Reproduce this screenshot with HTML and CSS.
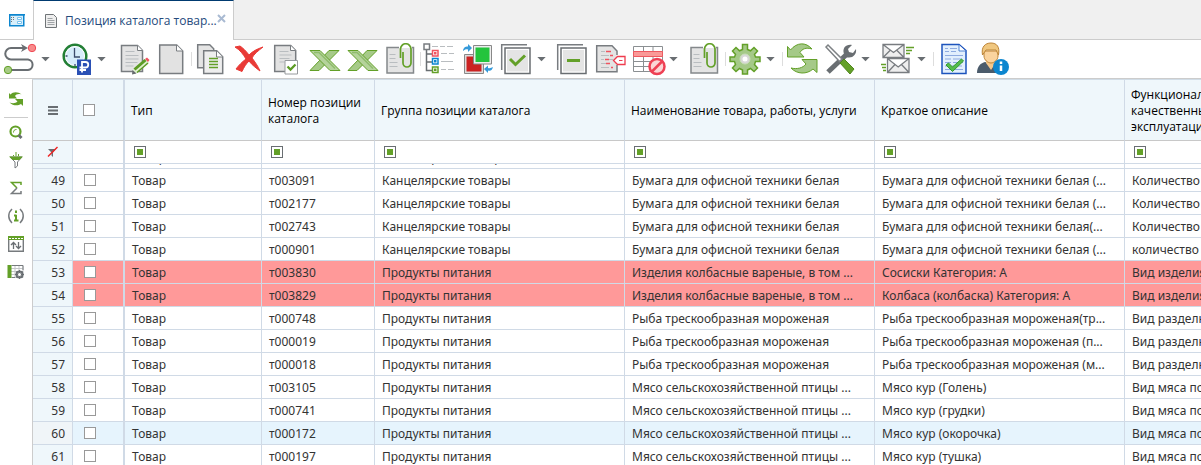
FILE: index.html
```html
<!DOCTYPE html>
<html lang="ru">
<head>
<meta charset="utf-8">
<title>Позиция каталога товаров</title>
<link rel="stylesheet" href="styles.css">
</head>
<body>
<svg class="defs" aria-hidden="true">
  <defs>
    <symbol id="xls" viewBox="0 0 32 32"><path d="M20 7.500h10L10 27.500H1L12 16z" fill="#a6ca88" stroke="#63a028"/><path d="M1 7.500h10l20 20H21z" fill="#b5d39b" stroke="#63a028"/><path d="M5 9.500h5l16 16" fill="none" stroke="#8fbc6c" stroke-width="1.500"/></symbol>
    <symbol id="clip" viewBox="0 0 32 32"><path d="M2 5h26.500v25H2z" fill="#e4e4e4"/><path d="M14 4.500H2v25.500h26.500v-25.500H27" fill="none" stroke="#84888b" stroke-width="1.500"/><path d="M4.500 11.500h6m-6 4h6m-6 4h8m-8 4h8" stroke="#b9bdc0"/><path d="M15.500 15V6a5 5 0 0 1 10.500 0v14a3.500 3.500 0 0 1-8 0V9" fill="none" stroke="#63a028" stroke-width="1.700"/></symbol>
    <symbol id="caret" viewBox="0 0 10 6"><path d="M0 0h10L5 5z" fill="#696e72"/></symbol>
  </defs>
</svg>

<header class="tabs">
  <button class="tab-home" aria-label="Главная"><svg width="16" height="14" viewBox="0 0 16 14"><path d="M.75 1.750h14v11h-14z" fill="#d8effb" stroke="#0c86cf" stroke-width="1.500"/><path d="M0 1h16v1.500H0z" fill="#0c86cf"/><path d="M2 4.500h1m1 0h1M2 6.500h1m1 0h1M2 8.500h1" stroke="#777"/><path d="M8.500 4.500h4v2h-4zm0 4h4v2h-4z" fill="#fff" stroke="#79c2ee"/></svg></button>
  <div class="tab">
    <svg width="12" height="14" viewBox="0 0 12 14"><path d="M.5.5h8l3 3v10H.5z" fill="#eee" stroke="#6f7477"/><path d="M2.500 4.500h5m-5 2h7m-7 2h7m-7 2h7" stroke="#a0a4a7"/></svg>
    <span class="tab-title">Позиция каталога товар...</span>
    <button class="tab-close" aria-label="Закрыть"><svg width="9" height="9" viewBox="0 0 9 9"><path d="M1 1l7 7M8 1L1 8" stroke="#a9bad2" stroke-width="2"/></svg></button>
  </div>
</header>

<nav class="toolbar">
  <div class="tool-group">
    <button class="tool" aria-label="Маршрут"><svg viewBox="0 0 32 32"><path d="M22 5H7a5.700 5.700 0 0 0 0 11.500h17a5.300 5.300 0 0 1 0 10.500H8" fill="none" stroke="#696e72" stroke-width="2"/><path d="M17 1l7 4-7 4 2-4z" fill="#696e72"/><circle cx="28" cy="5" r="3.700" fill="#f88b8b" stroke="#ef4a55"/><circle cx="4" cy="27" r="3.700" fill="#a7cb85" stroke="#63a028"/></svg></button>
    <button class="more" aria-label="Ещё"><svg><use href="#caret"/></svg></button>
    <button class="tool" aria-label="Расчёт"><svg viewBox="0 0 32 32"><circle cx="15" cy="13" r="11.300" fill="#d7edfb" stroke="#237f35" stroke-width="2.500"/><circle cx="15" cy="13" r="9.500" fill="none" stroke="#fff"/><path d="M14.500 5v9H20M15 21v2M5.500 13h2" fill="none" stroke="#3c4c6c" stroke-width="1.300"/><path d="M17 16.500h14V32H17z" fill="#2a50b5"/><path d="M22 29.500v-10.500h3.500a2.700 2.700 0 0 1 0 5.500H19.500m0 2.500H26" fill="none" stroke="#fff" stroke-width="1.800"/></svg></button>
    <button class="more" aria-label="Ещё"><svg><use href="#caret"/></svg></button>
  </div>
  <div class="tool-group">
    <button class="tool" aria-label="Изменить"><svg viewBox="0 0 32 32"><path d="M3.500 2.500h16l5 5v21h-21z" fill="#e4e4e4" stroke="#787c80" stroke-width="1.500"/><path d="M19.500 2.500v5h5" fill="#fff" stroke="#787c80"/><path d="M7.500 8.500h9m-9 4h13m-13 3.500h13m-13 3.500h12m-12 3.500h8" stroke="#b9bdc0"/><path d="M14.500 31l1-5L27 16l4 3.500-12 10.500z" fill="#dff0cd"/><path d="M17 27l11-9.500M19 29.500L30 20M16 26l11-9.500" stroke="#5c9b24" stroke-width="1.500"/><path d="M14 31.500l.5-4.500 4 3.500z" fill="#676b6f"/><path d="M27 16l2-1.500 2.500 2.500-1.500 2z" fill="#f05360"/></svg></button>
    <button class="tool" aria-label="Создать"><svg viewBox="0 0 32 32"><path d="M3.700 2h17l6 6v22.500h-23z" fill="#e2e2e2" stroke="#787c80" stroke-width="1.500"/><path d="M20.500 2v6h6" fill="#fff" stroke="#787c80"/></svg></button>
    <span class="sep"></span>
    <button class="tool" aria-label="Копировать"><svg viewBox="0 0 32 32"><path d="M2.700 1.700h12l4 4v19h-16z" fill="#e4e4e4" stroke="#787c80" stroke-width="1.500"/><path d="M8.700 7.700h13l6 6v16.800h-19z" fill="#eee" stroke="#787c80" stroke-width="1.500"/><path d="M21.500 8v6h6" fill="#fff" stroke="#787c80"/><path d="M14 15.500h9m-9 3h9m-9 3h9m-9 3h9" stroke="#63a028" stroke-width="1.300"/></svg></button>
    <button class="tool" aria-label="Удалить"><svg viewBox="0 0 32 32"><path d="M2 4l5-1c3 2 6 5 9 9 4-4 8-6 14-8-5 4-9 7-11 11 3 4 6 8 8 13-4-3-8-6-11-10-3 3-5 6-7 10.500L3 26c3-4 6-7 10-10-3-5-6-9-11-12z" fill="#e93a36" stroke="#e93a36"/></svg></button>
    <button class="tool" aria-label="Проверить"><svg viewBox="0 0 32 32"><path d="M3.700 2.500h16l5 5v21h-21z" fill="#e2e2e2" stroke="#787c80" stroke-width="1.500"/><path d="M19.500 2.500v5h5" fill="#fff" stroke="#787c80"/><path d="M8.500 8.500h9m-9 3.500h12m-12 3.500h10m-10 3.500h5" stroke="#b9bdc0"/><path d="M14 17.500h12.500V31H14z" fill="#fff" stroke="#969a9d"/><path d="M16.500 23.500l3 3 5-5" fill="none" stroke="#5c9b24" stroke-width="2.300"/></svg></button>
    <button class="tool" aria-label="Экспорт в Excel"><svg><use href="#xls"/></svg></button>
    <button class="tool" aria-label="Экспорт списка в Excel"><svg><use href="#xls"/></svg></button>
    <button class="tool" aria-label="Вложения"><svg><use href="#clip"/></svg></button>
    <span class="sep"></span>
    <button class="tool" aria-label="Иерархия"><svg viewBox="0 0 32 32"><path d="M2.500 6.500v21H8M2.500 11H8m-5.500 8H8" fill="none" stroke="#696e72" stroke-width="1.500"/><g fill="#fff" stroke-width="1.500"><path d="M0 1h5.500v5.500H0z" stroke="#787c80"/><path d="M8.500 7.500H14V13H8.500z" stroke="#f05360"/><path d="M8.500 15.500H14V21H8.500z" stroke="#0c86cf"/><path d="M8.500 24H14v5.500H8.500z" stroke="#63a028"/></g><path d="M10 9h2.500v2.500H10z" fill="#f05360"/><path d="M10 17h2.500v2.500H10z" fill="#0c86cf"/><path d="M10 25.500h2.500V28H10z" fill="#63a028"/><path d="M8 3.500h6m2 0h5m2 0h6M17 10.500h6m2 0h5M17 18.500h12M17 26.500h5m2 0h6" stroke="#b9bdc0"/></svg></button>
    <button class="tool" aria-label="Обмен"><svg viewBox="0 0 32 32"><path d="M2.500 11.500h19v19h-19z" fill="#ddd" stroke="#888"/><path d="M4.500 13.500h15v15h-15z" fill="#cb2222"/><path d="M11.500 2.500h18v18.500h-18z" fill="#eee" stroke="#888"/><path d="M13.500 4.500h14V19h-14z" fill="#23c43d"/><path d="M1 7c1-3 3-4 5-3.500V1l4 4-4 4V6.500C4 6 3 6.500 1 8z" fill="#359ada"/><path d="M31 24c-1 4-3 4-5 3.500V30l-4-4 4-3.500V25c2 .5 3 0 5-1z" fill="#359ada"/></svg></button>
    <button class="tool" aria-label="Отметить"><svg viewBox="0 0 32 32"><path d="M1.700 27V1.700H27" fill="none" stroke="#787c80" stroke-width="1.500"/><path d="M5 5h25v25.500H5z" fill="#fff" stroke="#696e72" stroke-width="1.500"/><path d="M7 7h21v21.500H7z" fill="#e4e4e4"/><path d="M10 16l5.500 5.500L25 12.500" fill="none" stroke="#63a028" stroke-width="3"/></svg></button>
    <button class="more" aria-label="Ещё"><svg><use href="#caret"/></svg></button>
    <button class="tool" aria-label="Снять отметку"><svg viewBox="0 0 32 32"><path d="M1.700 27V1.700H27" fill="none" stroke="#787c80" stroke-width="1.500"/><path d="M5 5h25v25.500H5z" fill="#fff" stroke="#696e72" stroke-width="1.500"/><path d="M7 7h21v21.500H7z" fill="#e4e4e4"/><path d="M11 17.500h13" stroke="#63a028" stroke-width="3"/></svg></button>
    <button class="tool" aria-label="Метка"><svg viewBox="0 0 32 32"><path d="M2.700 2.700h15l5 5v21h-20z" fill="#e4e4e4"/><path d="M23 12V8l-5-5.300H2.700v26H23V22" fill="none" stroke="#787c80" stroke-width="1.500"/><path d="M7 8.500h4m-4 4h8m-8 4h3m5 0h4m-12 4h5m-5 4h8" stroke="#b9bdc0"/><path d="M12 8.500h5m-1 4h3m-8 4h4m-3 4h4m1 4h2" stroke="#f05360" stroke-width="1.500"/><path d="M19.500 17.500l4-4H31v8h-7.500z" fill="#fff" stroke="#ef3c4e" stroke-width="1.300"/><path d="M25 17.500h3.500" stroke="#ef3c4e"/></svg></button>
    <button class="tool" aria-label="Запретить строки"><svg viewBox="0 0 32 32"><path d="M1.500 3.500h29v25h-29zM1.500 13.500h29M1.500 18.500h29M1.500 23.500h29M11.500 3v25M21 3v25" fill="#fff" stroke="#8b8f92"/><path d="M1.500 8.500h29v5h-29z" fill="#f99a98" stroke="#ee5a61"/><circle cx="25" cy="23.500" r="7.500" fill="#fbd5d6" stroke="#ee4054" stroke-width="2.500"/><path d="M20 18.500l10 10" stroke="#ee4054" stroke-width="2.500" transform="matrix(-1 0 0 1 50 0)"/></svg></button>
    <button class="more" aria-label="Ещё"><svg><use href="#caret"/></svg></button>
    <button class="tool" aria-label="Прикрепить"><svg><use href="#clip" x="1"/></svg></button>
  </div>
  <span class="sep"></span>
  <div class="tool-group">
    <button class="tool" aria-label="Настройки"><svg viewBox="0 0 32 32"><path d="M13.500 1.500h5v5l3 1.300L25 4.500l3.500 3.500-3 3.500 1 2.500H31v4.500h-4.500l-1 3 3 3.500-3.500 3.500-3.500-3-3 1.500v4h-5v-4l-3-1.500L7 28.500 3.500 25l3-3.500-1-3H1V14h4.500l1-2.500-3-3.500L7 4.500l3.500 3.300 3-1.300z" fill="#a5c988" stroke="#63a028" stroke-width="1.500"/><circle cx="16" cy="16" r="5" fill="#d8d8d8" stroke="#c9dfb8"/><circle cx="16" cy="16" r="2.500" fill="#fff"/></svg></button>
    <button class="more" aria-label="Ещё"><svg><use href="#caret"/></svg></button>
    <span class="sep"></span>
    <button class="tool" aria-label="Обновить"><svg viewBox="0 0 32 32"><path d="M1.500 3.500l3 3.500C11-1 20-1 26 6c-6-2-10 0-12 3.500l4 4.500H1.500z" fill="#a5c988" stroke="#63a028"/><path d="M31 29.500V16.500H16l4 4.500c-3 4-9 5.500-15 4 6 6.500 16 6.500 22 1z" fill="#a5c988" stroke="#63a028"/></svg></button>
    <button class="tool" aria-label="Инструменты"><svg viewBox="0 0 32 32"><path d="M4 29L23 11" stroke="#696e72" stroke-width="5"/><path d="M20 11c-2-6 2-10 8-9l-4 4 1 3 4 1 3-4c1 6-4 10-10 8z" fill="#696e72"/><path d="M2 4l2-2 14 14-2.500 2.500z" fill="#fff" stroke="#7d8184" stroke-width="1.500"/><path d="M16 20l4-4 10 10-4 5z" fill="#63a028" stroke="#4f861c"/></svg></button>
    <button class="more" aria-label="Ещё"><svg><use href="#caret"/></svg></button>
    <button class="tool" aria-label="Рассылка"><svg viewBox="0 0 32 32"><g fill="#eee" stroke="#787c80" stroke-width="1.300"><path d="M3 1.500h21v13H3zM3 1.500l10.500 8 10.500-8M3 14.500l7-7m14 7l-7-7"/><path d="M7.500 15.500H29v14H7.500zm0 0l10.700 8.500 10.800-8.500m-21.500 14l7.500-8m14 8l-7.500-8"/></g><path d="M26 4.500h8m-8 3h6m-6 3h4M1 21.500h5m-4 3h4m-3 3h3" stroke="#63a028" stroke-width="1.300"/></svg></button>
    <button class="more" aria-label="Ещё"><svg><use href="#caret"/></svg></button>
    <span class="sep"></span>
    <button class="tool" aria-label="Протокол"><svg viewBox="0 0 32 32"><path d="M5 1.500h17l7 6v23H5z" fill="#e2effd" stroke="#1d54bd" stroke-width="1.500"/><path d="M22 2v6h6.500" fill="#fff" stroke="#4e83d4"/><path d="M8 5.500h3m2 0h7M8 8.500h4m2 0h5M8 12.500h18M8 16h6m2 0h9M8 19.500h6m2 0h10M8 23h5m2 0h10M8 26.500h18" stroke="#8eabe0"/><path d="M9 22l2.500-2 4 4L24.500 16l2 2L15.500 28.500z" fill="#54bd4b" stroke="#329a2c"/></svg></button>
    <button class="tool" aria-label="О пользователе"><svg viewBox="0 0 32 32"><path d="M2 30c0-7 4-10 8-11l7 2 6 9z" fill="#4b5b6b"/><path d="M11 16h9v5l-4 6-5-7z" fill="#f5c78b"/><path d="M9 8h14v5c0 4-4 7-7 7s-7-3-7-7z" fill="#fad39e" stroke="#bd8437"/><path d="M7.500 12C6 4 10 0 16 0s9 4 7.500 12L21 7H11z" fill="#f0c77f" stroke="#bd8437"/><circle cx="26" cy="24" r="8" fill="#0c86cf"/><path d="M26 22.500V28M26 18.500V21" stroke="#fff" stroke-width="2.500"/></svg></button>
  </div>
</nav>

<main class="workspace">
  <aside class="side">
    <button class="side-btn" aria-label="Обновить"><svg width="16" height="16" viewBox="0 0 16 16"><path d="M1 2l1.500 1.500C5 .5 10 .5 13.500 3.500 10 2.500 8 3.500 7 5l2 2.500H1z" fill="#63a028"/><path d="M15 15V8H7l2.500 2.500c-2 2-5 2-8 1 3.500 3.500 8.500 3.500 11.500 1.500z" fill="#63a028"/></svg></button>
    <button class="side-btn" aria-label="Поиск"><svg width="16" height="16" viewBox="0 0 16 16"><circle cx="7.500" cy="7.500" r="5" fill="#fff" stroke="#63a028" stroke-width="2.200"/><path d="M5.500 8.500c0-2 1-3 3-3" fill="none" stroke="#63a028"/><path d="M10.500 11l3 3" stroke="#696e72" stroke-width="3"/></svg></button>
    <button class="side-btn" aria-label="Фильтр"><svg width="16" height="16" viewBox="0 0 16 16"><path d="M2 5h12l-4.500 5v4l-2.500 2v-6z" fill="#fff" stroke="#777b7e"/><path d="M1 4.500h14L11.500 8h-7z" fill="#63a028"/><path d="M5.500 3v1m2.500-4v4m2.500-2v2" stroke="#63a028"/></svg></button>
    <button class="side-btn" aria-label="Сумма"><svg width="16" height="16" viewBox="0 0 16 16"><path d="M13 5V2.500H3.500L9 8" fill="none" stroke="#63a028" stroke-width="1.500"/><path d="M9 8l-5.500 5.500H13V11" fill="none" stroke="#777b7e" stroke-width="1.500"/></svg></button>
    <button class="side-btn" aria-label="Информация"><svg width="16" height="16" viewBox="0 0 16 16"><path d="M4 1C-.3 5-.3 11 4 15M12 1c4.300 4 4.300 10 0 14" fill="none" stroke="#777b7e" stroke-width="1.500"/><path d="M8 7v6M6 7.500h2.500M6 12.500h4.500M8 2.500v2.500" stroke="#63a028" stroke-width="2"/></svg></button>
    <button class="side-btn" aria-label="Сортировка"><svg width="16" height="16" viewBox="0 0 16 16"><path d="M.7.7h14.600v14.600H.7z" fill="#fff" stroke="#777b7e" stroke-width="1.400"/><path d="M0 0h16v4H0z" fill="#63a028"/><path d="M1 2.500h14" stroke="#fff" stroke-dasharray="2 1"/><path d="M5.500 13V6.500M3 9l2.500-2.500L8 9M10.500 6v6.500M8 10l2.500 2.500L13 10" fill="none" stroke="#696e72" stroke-width="1.300"/></svg></button>
    <button class="side-btn" aria-label="Настройка таблицы"><svg width="16" height="16" viewBox="0 0 16 16"><path d="M1 1.500h14v12H1zM1 4.500h14M1 7.500h14M1 10.500h14M7 1v13M11 1v13" fill="#fff" stroke="#c4c7c9"/><path d="M2.500 1v13M.5 1v13" stroke="#63a028" stroke-width="2"/><path d="M4 1.500h11V6M4 13.500h3" fill="none" stroke="#777b7e"/><circle cx="11.500" cy="10.500" r="3" fill="#fff" stroke="#696e72" stroke-width="2"/><path d="M11.500 6v9M7 10.500h9M8.500 7.500l6 6M14.500 7.500l-6 6" stroke="#696e72"/><circle cx="11.500" cy="10.500" r="1.500" fill="#fff"/></svg></button>
  </aside>

  <section class="grid">
    <table class="sheet sheet-head">
      <colgroup><col class="c-num"><col class="c-check"><col class="c-type"><col class="c-code"><col class="c-text"><col class="c-text"><col class="c-text"><col class="c-text"></colgroup>
      <thead>
        <tr class="titles">
          <th><button class="menu" aria-label="Меню"><svg width="10" height="9" viewBox="0 0 10 9"><path d="M0 1h10M0 4.500h10M0 8h10" stroke="#696e72" stroke-width="2"/></svg></button></th>
          <th><input type="checkbox" aria-label="Выбрать все"></th>
          <th>Тип</th><th>Номер позиции каталога</th><th>Группа позиции каталога</th><th>Наименование товара, работы, услуги</th><th>Краткое описание</th><th>Функциональные,<br>качественные,<br>эксплуатационные</th>
        </tr>
        <tr class="filters">
          <td><button class="menu" aria-label="Сбросить фильтр"><svg width="12" height="12" viewBox="0 0 12 12"><path d="M1 3h8L6 6.500V11L4.500 9.500v-3z" fill="#696e72"/><path d="M1 10.500L10.500 1" stroke="#e22" stroke-width="1.500"/></svg></button></td>
          <td></td>
          <td><button class="filter" aria-label="Фильтр: тип"></button></td>
          <td><button class="filter" aria-label="Фильтр: номер"></button></td>
          <td><button class="filter" aria-label="Фильтр: группа"></button></td>
          <td><button class="filter" aria-label="Фильтр: наименование"></button></td>
          <td><button class="filter" aria-label="Фильтр: описание"></button></td>
          <td><button class="filter" aria-label="Фильтр: характеристики"></button></td>
        </tr>
      </thead>
    </table>
    <div class="viewport">
      <table class="sheet sheet-body">
        <colgroup><col class="c-num"><col class="c-check"><col class="c-type"><col class="c-code"><col class="c-text"><col class="c-text"><col class="c-text"><col class="c-text"></colgroup>
        <tbody>
          <tr><th>48</th><td></td><td>Товар</td><td></td><td>Канцелярские товары</td><td></td><td></td><td></td></tr>
          <tr><th>49</th><td><input type="checkbox" aria-label="Строка 49"></td><td>Товар</td><td>т003091</td><td>Канцелярские товары</td><td>Бумага для офисной техники белая</td><td>Бумага для офисной техники белая (...</td><td>Количество листов</td></tr>
          <tr><th>50</th><td><input type="checkbox" aria-label="Строка 50"></td><td>Товар</td><td>т002177</td><td>Канцелярские товары</td><td>Бумага для офисной техники белая</td><td>Бумага для офисной техники белая (...</td><td>Количество листов</td></tr>
          <tr><th>51</th><td><input type="checkbox" aria-label="Строка 51"></td><td>Товар</td><td>т002743</td><td>Канцелярские товары</td><td>Бумага для офисной техники белая</td><td>Бумага для офисной техники белая(...</td><td>Количество листов</td></tr>
          <tr><th>52</th><td><input type="checkbox" aria-label="Строка 52"></td><td>Товар</td><td>т000901</td><td>Канцелярские товары</td><td>Бумага для офисной техники белая</td><td>Бумага для офисной техники белая (...</td><td>количество листов</td></tr>
          <tr class="alert"><th>53</th><td><input type="checkbox" aria-label="Строка 53"></td><td>Товар</td><td>т003830</td><td>Продукты питания</td><td>Изделия колбасные вареные, в том ...</td><td>Сосиски Категория: А</td><td>Вид изделия</td></tr>
          <tr class="alert"><th>54</th><td><input type="checkbox" aria-label="Строка 54"></td><td>Товар</td><td>т003829</td><td>Продукты питания</td><td>Изделия колбасные вареные, в том ...</td><td>Колбаса (колбаска) Категория: А</td><td>Вид изделия</td></tr>
          <tr><th>55</th><td><input type="checkbox" aria-label="Строка 55"></td><td>Товар</td><td>т000748</td><td>Продукты питания</td><td>Рыба трескообразная мороженая</td><td>Рыба трескообразная мороженая(тр...</td><td>Вид разделки</td></tr>
          <tr><th>56</th><td><input type="checkbox" aria-label="Строка 56"></td><td>Товар</td><td>т000019</td><td>Продукты питания</td><td>Рыба трескообразная мороженая</td><td>Рыба трескообразная мороженая (п...</td><td>Вид разделки</td></tr>
          <tr><th>57</th><td><input type="checkbox" aria-label="Строка 57"></td><td>Товар</td><td>т000018</td><td>Продукты питания</td><td>Рыба трескообразная мороженая</td><td>Рыба трескообразная мороженая (м...</td><td>Вид разделки</td></tr>
          <tr><th>58</th><td><input type="checkbox" aria-label="Строка 58"></td><td>Товар</td><td>т003105</td><td>Продукты питания</td><td>Мясо сельскохозяйственной птицы ...</td><td>Мясо кур (Голень)</td><td>Вид мяса по способу</td></tr>
          <tr><th>59</th><td><input type="checkbox" aria-label="Строка 59"></td><td>Товар</td><td>т000741</td><td>Продукты питания</td><td>Мясо сельскохозяйственной птицы ...</td><td>Мясо кур (грудки)</td><td>Вид мяса по способу</td></tr>
          <tr class="current"><th>60</th><td><input type="checkbox" aria-label="Строка 60"></td><td>Товар</td><td>т000172</td><td>Продукты питания</td><td>Мясо сельскохозяйственной птицы ...</td><td>Мясо кур (окорочка)</td><td>Вид мяса по способу</td></tr>
          <tr><th>61</th><td><input type="checkbox" aria-label="Строка 61"></td><td>Товар</td><td>т000197</td><td>Продукты питания</td><td>Мясо сельскохозяйственной птицы ...</td><td>Мясо кур (тушка)</td><td>Вид мяса по способу</td></tr>
        </tbody>
      </table>
    </div>
  </section>
</main>
</body>
</html>
```
FILE: styles.css
```css
* { box-sizing: border-box; }
body {
  margin: 0;
  height: 100vh;
  display: flex;
  flex-direction: column;
  overflow: hidden;
  background: #fff;
  color: #333;
  font: 12px/16px "Open Sans", "Noto Sans", sans-serif;
}
button { border: 0; padding: 0; margin: 0; background: none; font: inherit; color: inherit; }
svg { display: block; flex: none; overflow: visible; }
.defs { position: absolute; width: 0; height: 0; }

.tabs { display: flex; flex: none; height: 40px; background: #f0f0f0; box-shadow: inset 0 -1px #ccc; }
.tab-home { width: 33px; background: #fff; display: grid; place-items: center; border-bottom: 1px solid #ccc; }
.tab {
  width: 201px;
  display: flex;
  padding: 0 7px 0 11px;
  align-items: center;
  background: #fff;
  border: 1px solid #ccc;
  border-top-color: #003a70;
  border-bottom: 0;
}
.tab-title { flex: 1; padding-left: 8px; color: #254a7c; white-space: nowrap; }
.tab-close { align-self: flex-start; padding-top: 13px; }

.toolbar { display: flex; flex: none; height: 39px; padding-left: 1px; border-bottom: 1px solid #ccc; }
.tool-group { display: flex; margin-right: 2px; }
.tool, .more { display: flex; align-items: center; }
.tool { width: 38px; justify-content: center; }
.tool svg { width: 32px; height: 32px; }
.more { width: 18px; padding-left: 2px; }
.more svg { width: 9px; height: 5px; }
.sep { width: 1px; height: 14px; margin-top: 12px; background: #ddd; }

.workspace { flex: 1; min-height: 0; display: flex; }
.side { width: 32px; flex: none; display: flex; flex-direction: column; align-items: center; gap: 12px; padding-top: 12px; }
.side-btn:first-child { width: 24px; padding: 0 4px 10px; border-bottom: 1px solid #ccc; margin-bottom: -6px; }
.grid { flex: 1; min-width: 0; overflow: hidden; display: flex; flex-direction: column; border-left: 1px solid #ccc; border-top: 1px solid #d0dce6; }
.viewport { flex: 1; min-height: 0; overflow: hidden; }
.sheet { width: 1342px; flex: none; table-layout: fixed; border-collapse: separate; border-spacing: 0; }
.sheet-body { margin-top: -18px; font-family: "Noto Sans", "Open Sans", sans-serif; }
.c-num { width: 40px; }
.c-check { width: 52px; }
.c-type { width: 137px; }
.c-code { width: 113px; }
.c-text { width: 250px; }
th, td {
  padding: 0 7px;
  border-right: 1px solid #d0dae6;
  border-bottom: 1px solid #d0dae6;
  text-align: left;
  font-weight: 400;
  white-space: nowrap;
  overflow: hidden;
}
tr > :nth-child(2) { border-right-width: 2px; padding-left: 11px; }
.titles th { height: 61px; padding: 0 6px; background: #eff7fb; color: #000; white-space: normal; border-bottom-color: #c8c8c8; }
.titles th:nth-child(n+3) { padding-top: 2px; }
.titles th:nth-child(2) { padding-left: 10px; }
.filters td { height: 23px; padding-left: 9px; }
.menu { width: 100%; display: grid; place-items: center; }
.filters td:first-child, .sheet-body th { background: #eff7fb; }
.filters td:first-child { padding: 0 6px; }
.sheet-body th, .sheet-body td { height: 23px; }
.sheet-body th, .sheet-body td:nth-child(n+3) { padding-top: 2px; }
.sheet-body th { text-align: right; }
.filter { display: block; width: 12px; height: 12px; border: 1px solid #696e72; padding: 2px; background: #63a028 content-box; }
input[type="checkbox"] { appearance: none; display: block; width: 12px; height: 12px; margin: 0; border: 1px solid #999; background: #fff; }
.alert td { background: #ff9999; }
.current td { background: #e6f4fd; }
.current th { background: #f0f5f8; }
```
